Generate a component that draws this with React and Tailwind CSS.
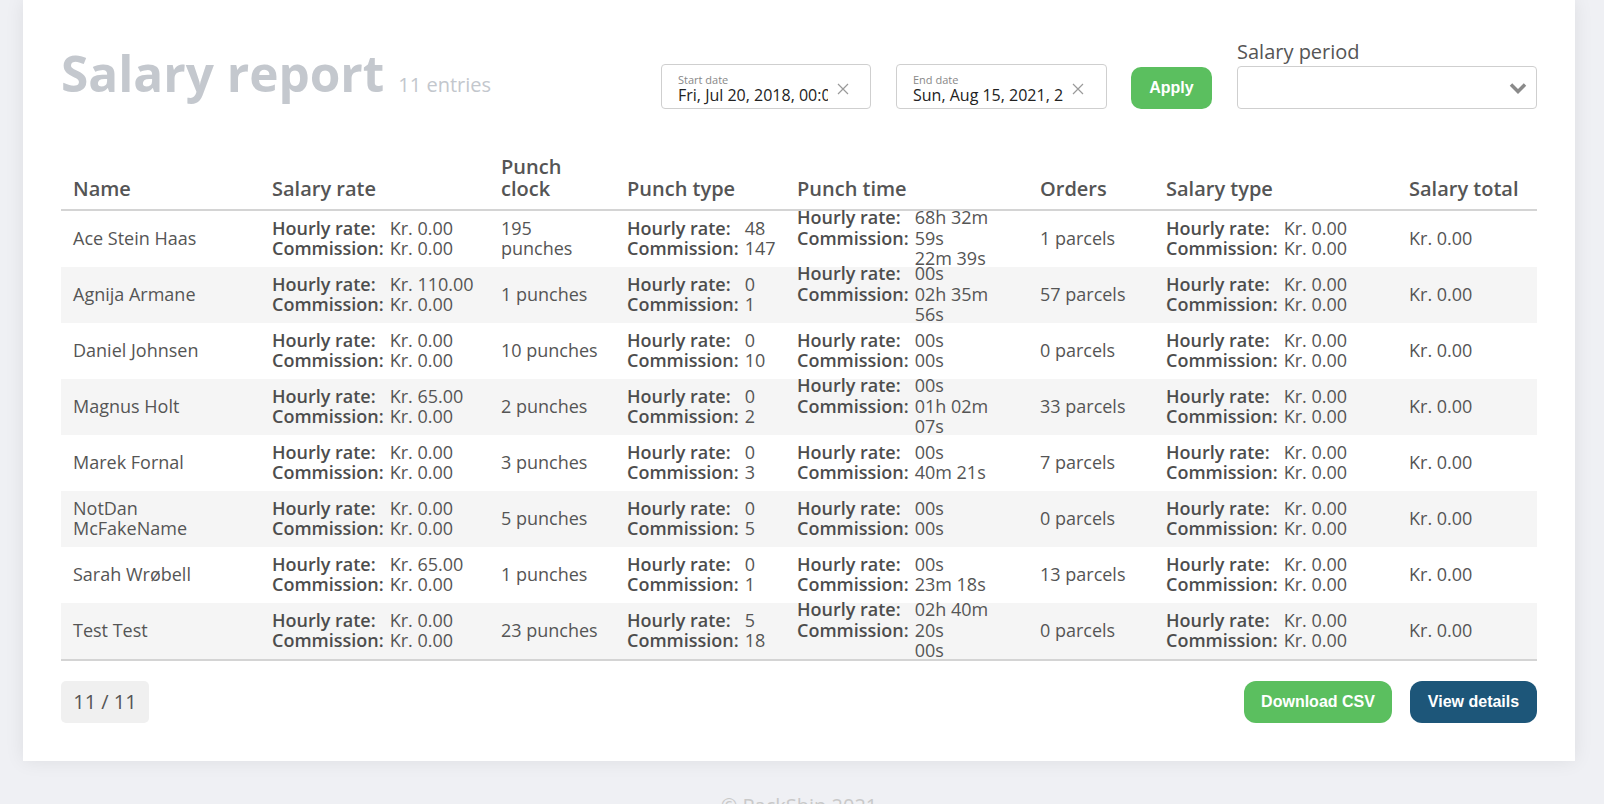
const rows = [
  { name: 'Ace Stein Haas', rate: ['Kr. 0.00', 'Kr. 0.00'], punches: '195 punches', type: ['48', '147'], time: ['68h 32m 59s', '22m 39s'], orders: '1 parcels', salary: ['Kr. 0.00', 'Kr. 0.00'], total: 'Kr. 0.00' },
  { name: 'Agnija Armane', rate: ['Kr. 110.00', 'Kr. 0.00'], punches: '1 punches', type: ['0', '1'], time: ['00s', '02h 35m 56s'], orders: '57 parcels', salary: ['Kr. 0.00', 'Kr. 0.00'], total: 'Kr. 0.00' },
  { name: 'Daniel Johnsen', rate: ['Kr. 0.00', 'Kr. 0.00'], punches: '10 punches', type: ['0', '10'], time: ['00s', '00s'], orders: '0 parcels', salary: ['Kr. 0.00', 'Kr. 0.00'], total: 'Kr. 0.00' },
  { name: 'Magnus Holt', rate: ['Kr. 65.00', 'Kr. 0.00'], punches: '2 punches', type: ['0', '2'], time: ['00s', '01h 02m 07s'], orders: '33 parcels', salary: ['Kr. 0.00', 'Kr. 0.00'], total: 'Kr. 0.00' },
  { name: 'Marek Fornal', rate: ['Kr. 0.00', 'Kr. 0.00'], punches: '3 punches', type: ['0', '3'], time: ['00s', '40m 21s'], orders: '7 parcels', salary: ['Kr. 0.00', 'Kr. 0.00'], total: 'Kr. 0.00' },
  { name: 'NotDan McFakeName', rate: ['Kr. 0.00', 'Kr. 0.00'], punches: '5 punches', type: ['0', '5'], time: ['00s', '00s'], orders: '0 parcels', salary: ['Kr. 0.00', 'Kr. 0.00'], total: 'Kr. 0.00' },
  { name: 'Sarah Wrøbell', rate: ['Kr. 65.00', 'Kr. 0.00'], punches: '1 punches', type: ['0', '1'], time: ['00s', '23m 18s'], orders: '13 parcels', salary: ['Kr. 0.00', 'Kr. 0.00'], total: 'Kr. 0.00' },
  { name: 'Test Test', rate: ['Kr. 0.00', 'Kr. 0.00'], punches: '23 punches', type: ['5', '18'], time: ['02h 40m 20s', '00s'], orders: '0 parcels', salary: ['Kr. 0.00', 'Kr. 0.00'], total: 'Kr. 0.00' },
]

const cols = 'grid grid-cols-[199px_229px_126px_170px_243px_126px_243px_141px]'

function Pair({ values }) {
  return (
    <div className="flex gap-x-[6px] w-full">
      <div className="flex flex-col shrink-0 font-semibold text-[#4d4d4d]">
        <span>Hourly rate:</span>
        <span>Commission:</span>
      </div>
      <div className="flex flex-col flex-1 min-w-0">
        {values.map((v, i) => <span key={i}>{v}</span>)}
      </div>
    </div>
  )
}

function DateBox({ label, value }) {
  return (
    <div className="w-full h-[45px] border border-[#cfcfcf] rounded-[4px] flex items-start pl-[16px] pt-[8px]">
      <div className="flex flex-col w-[150px] overflow-hidden whitespace-nowrap">
        <span className="text-[11px] leading-[13px] text-[#888]">{label}</span>
        <span className="text-[16px] leading-[19px] text-[#222]">{value}</span>
      </div>
      <svg className="ml-[9px] mt-[10px]" width="12" height="12" viewBox="0 0 12 12">
        <path d="M1 1L11 11M11 1L1 11" stroke="#9a9a9a" strokeWidth="1.2" />
      </svg>
    </div>
  )
}

export default function App() {
  return (
    <div className="min-h-screen bg-[#eff0f4] overflow-hidden font-['Open_Sans',sans-serif]">
      <div className="ml-[23px] w-[1552px] bg-white shadow-[0_0_18px_rgba(0,0,0,0.08)] px-[38px] pt-[38px] pb-[38px]">
        {/* Header */}
        <div className="flex items-end justify-between">
          <div className="flex items-baseline gap-[14px] mb-[9px]">
            <h1 className="text-[49.5px] leading-[50px] font-bold text-[#c4c8ce]">Salary report</h1>
            <span className="text-[20px] text-[#c3c7cd]">11 entries</span>
          </div>
          <div className="flex items-end">
            <div className="w-[210px]">
              <DateBox label="Start date" value="Fri, Jul 20, 2018, 00:00" />
            </div>
            <div className="w-[211px] ml-[25px]">
              <DateBox label="End date" value="Sun, Aug 15, 2021, 23:59" />
            </div>
            <button className="ml-[24px] w-[81px] h-[42px] rounded-[10px] bg-[#5bbf5f] text-white font-bold text-[16px] font-['Liberation_Sans',sans-serif]">
              Apply
            </button>
            <div className="ml-[25px] w-[300px] flex flex-col">
              <span className="text-[20px] leading-[27px] text-[#555] mb-px">Salary period</span>
              <div className="h-[43px] border border-[#cfcfcf] rounded-[4px] flex items-center justify-end pr-[9px]">
                <svg width="18" height="12" viewBox="0 0 18 12">
                  <path d="M2 2.5L9 9.5L16 2.5" fill="none" stroke="#8a8a8a" strokeWidth="3.5" />
                </svg>
              </div>
            </div>
          </div>
        </div>

        {/* Table */}
        <div className="mt-[47px] text-[18px] leading-[20.5px] text-[#555]">
          <div className={`${cols} border-b-2 border-[#d4d4d4] text-[20px] leading-[21.5px] font-semibold text-[#555]`}>
            {['Name', 'Salary rate', 'Punch clock', 'Punch type', 'Punch time', 'Orders', 'Salary type', 'Salary total'].map(h => (
              <div key={h} className="px-3 pb-[10px] flex items-end">{h}</div>
            ))}
          </div>
          <div className="border-b-2 border-[#d4d4d4]">
            {rows.map((r, i) => (
              <div key={r.name} className={`${cols} grid-rows-[56px] h-[56px] ${i % 2 ? 'bg-[#f5f5f5]' : 'bg-white'}`}>
                <div className="px-3 pb-[2px] flex items-center">{r.name}</div>
                <div className="px-3 pb-[2px] flex items-center"><Pair values={r.rate} /></div>
                <div className="px-3 pb-[2px] flex items-center">{r.punches}</div>
                <div className="px-3 pb-[2px] flex items-center"><Pair values={r.type} /></div>
                <div className="px-3 pb-[2px] flex items-center"><Pair values={r.time} /></div>
                <div className="px-3 pb-[2px] flex items-center">{r.orders}</div>
                <div className="px-3 pb-[2px] flex items-center"><Pair values={r.salary} /></div>
                <div className="px-3 pb-[2px] flex items-center">{r.total}</div>
              </div>
            ))}
          </div>
        </div>

        {/* Footer */}
        <div className="mt-[20px] flex items-center justify-between">
          <div className="w-[88px] h-[42px] rounded-[5px] bg-[#f0f0f0] flex items-center justify-center text-[20px] text-[#555]">
            11 / 11
          </div>
          <div className="flex gap-[18px] font-['Liberation_Sans',sans-serif] font-bold text-[16px] text-white">
            <button className="w-[148px] h-[42px] rounded-[12px] bg-[#5bbf5f]">Download CSV</button>
            <button className="w-[127px] h-[42px] rounded-[12px] bg-[#1d5679]">View details</button>
          </div>
        </div>
      </div>
      <div className="ml-[23px] w-[1552px] mt-[30px] text-center text-[20px] text-[#c9c9c9]">© PackShip 2021</div>
    </div>
  )
}
